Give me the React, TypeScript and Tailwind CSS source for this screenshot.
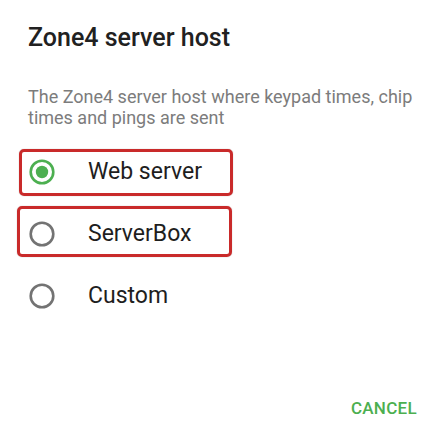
const options = [
  { id: "web", label: "Web server", checked: true, box: "left-[19px] top-[8px] w-[214px] h-[47px]" },
  { id: "box", label: "ServerBox", checked: false, box: "left-[17px] top-[3px] w-[215px] h-[51px]" },
  { id: "custom", label: "Custom", checked: false, box: "" },
];

const Radio = ({ checked }: { checked: boolean }) => (
  <svg width="26" height="26" viewBox="0 0 26 26" className="shrink-0">
    <circle
      cx="13"
      cy="13"
      r="11.3"
      fill="none"
      stroke={checked ? "#4caf50" : "#737373"}
      strokeWidth="2.6"
    />
    {checked && <circle cx="13" cy="13" r="6.2" fill="#4caf50" />}
  </svg>
);

export default function App() {
  return (
    <div className="h-[446px] w-[447px] bg-white font-['Roboto',sans-serif] flex flex-col">
      <h1 className="pl-[28px] pt-[22px] text-[25px] leading-[32px] font-medium text-[#212121]">
        Zone4 server host
      </h1>

      <p className="pl-[28px] pr-[20px] mt-[32px] text-[18px] leading-[21px] text-[#7c7c7c]">
        The Zone4 server host where keypad times, chip times and pings are sent
      </p>

      <div className="mt-[13px] flex flex-col">
        {options.map((opt) => (
          <div key={opt.id} className="relative flex h-[62px] items-center pl-[29px]">
            <Radio checked={opt.checked} />
            <span className="ml-[33px] text-[23px] text-[#1e1e1e]">{opt.label}</span>
            {opt.box && (
              <div
                className={`absolute ${opt.box} rounded-[5px] border-[3px] border-[#c92a2a] shadow-[0_0_1px_rgba(0,0,0,0.4)]`}
              />
            )}
          </div>
        ))}
      </div>

      <div className="mt-[71px] flex justify-end pr-[30px]">
        <button className="text-[17px] leading-[20px] font-medium tracking-[0.3px] text-[#4caf50]">
          CANCEL
        </button>
      </div>
    </div>
  );
}
